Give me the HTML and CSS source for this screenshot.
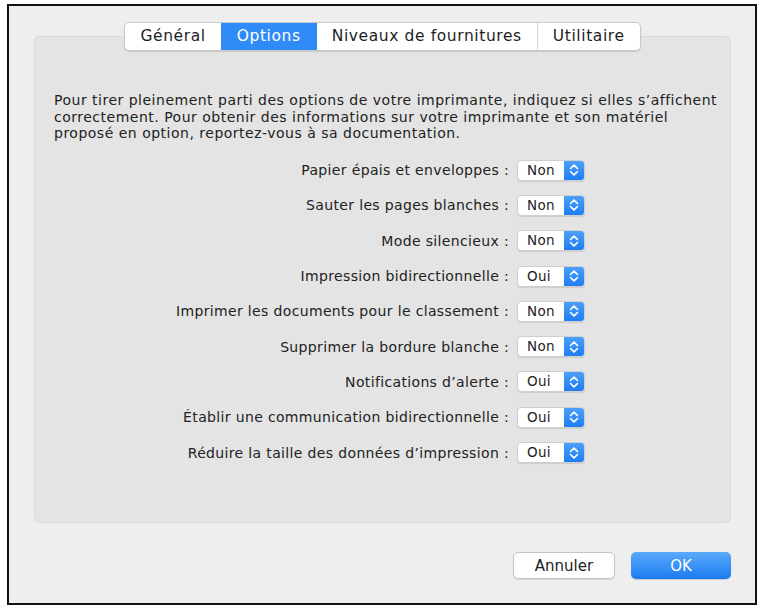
FILE: index.html
```html
<!DOCTYPE html>
<html lang="fr">
<head>
    <meta charset="UTF-8">
    <meta name="viewport" content="width=device-width, initial-scale=1.0">
    <title>Options de l'imprimante</title>
    <link rel="stylesheet" href="styles.css">
</head>
<body>

  <div class="window">

    <!-- Tab bar sits across the top edge of the panel -->
    <div class="tab-bar">
      <div class="tab">Général</div>
      <div class="tab tab-active">Options</div>
      <div class="tab">Niveaux de fournitures</div>
      <div class="tab">Utilitaire</div>
    </div>

    <div class="panel">
      <p class="intro">
        Pour tirer pleinement parti des options de votre imprimante, indiquez si elles s’affichent<br>
        correctement. Pour obtenir des informations sur votre imprimante et son matériel<br>
        proposé en option, reportez-vous à sa documentation.
      </p>

      <div class="options">
        <div class="option-row">
          <span class="option-label">Papier épais et enveloppes :</span>
          <div class="popup"><span class="popup-value">Non</span><span class="popup-arrows"><svg viewBox="0 0 20 20" width="20" height="20"><path d="M6.5 8.5 10 5.2l3.5 3.3M6.5 11.5 10 14.8l3.5-3.3" fill="none" stroke="#fff" stroke-width="1.6" stroke-linecap="round" stroke-linejoin="round"/></svg></span></div>
        </div>
        <div class="option-row">
          <span class="option-label">Sauter les pages blanches :</span>
          <div class="popup"><span class="popup-value">Non</span><span class="popup-arrows"><svg viewBox="0 0 20 20" width="20" height="20"><path d="M6.5 8.5 10 5.2l3.5 3.3M6.5 11.5 10 14.8l3.5-3.3" fill="none" stroke="#fff" stroke-width="1.6" stroke-linecap="round" stroke-linejoin="round"/></svg></span></div>
        </div>
        <div class="option-row">
          <span class="option-label">Mode silencieux :</span>
          <div class="popup"><span class="popup-value">Non</span><span class="popup-arrows"><svg viewBox="0 0 20 20" width="20" height="20"><path d="M6.5 8.5 10 5.2l3.5 3.3M6.5 11.5 10 14.8l3.5-3.3" fill="none" stroke="#fff" stroke-width="1.6" stroke-linecap="round" stroke-linejoin="round"/></svg></span></div>
        </div>
        <div class="option-row">
          <span class="option-label">Impression bidirectionnelle :</span>
          <div class="popup"><span class="popup-value">Oui</span><span class="popup-arrows"><svg viewBox="0 0 20 20" width="20" height="20"><path d="M6.5 8.5 10 5.2l3.5 3.3M6.5 11.5 10 14.8l3.5-3.3" fill="none" stroke="#fff" stroke-width="1.6" stroke-linecap="round" stroke-linejoin="round"/></svg></span></div>
        </div>
        <div class="option-row">
          <span class="option-label">Imprimer les documents pour le classement :</span>
          <div class="popup"><span class="popup-value">Non</span><span class="popup-arrows"><svg viewBox="0 0 20 20" width="20" height="20"><path d="M6.5 8.5 10 5.2l3.5 3.3M6.5 11.5 10 14.8l3.5-3.3" fill="none" stroke="#fff" stroke-width="1.6" stroke-linecap="round" stroke-linejoin="round"/></svg></span></div>
        </div>
        <div class="option-row">
          <span class="option-label">Supprimer la bordure blanche :</span>
          <div class="popup"><span class="popup-value">Non</span><span class="popup-arrows"><svg viewBox="0 0 20 20" width="20" height="20"><path d="M6.5 8.5 10 5.2l3.5 3.3M6.5 11.5 10 14.8l3.5-3.3" fill="none" stroke="#fff" stroke-width="1.6" stroke-linecap="round" stroke-linejoin="round"/></svg></span></div>
        </div>
        <div class="option-row">
          <span class="option-label">Notifications d’alerte :</span>
          <div class="popup"><span class="popup-value">Oui</span><span class="popup-arrows"><svg viewBox="0 0 20 20" width="20" height="20"><path d="M6.5 8.5 10 5.2l3.5 3.3M6.5 11.5 10 14.8l3.5-3.3" fill="none" stroke="#fff" stroke-width="1.6" stroke-linecap="round" stroke-linejoin="round"/></svg></span></div>
        </div>
        <div class="option-row">
          <span class="option-label">Établir une communication bidirectionnelle :</span>
          <div class="popup"><span class="popup-value">Oui</span><span class="popup-arrows"><svg viewBox="0 0 20 20" width="20" height="20"><path d="M6.5 8.5 10 5.2l3.5 3.3M6.5 11.5 10 14.8l3.5-3.3" fill="none" stroke="#fff" stroke-width="1.6" stroke-linecap="round" stroke-linejoin="round"/></svg></span></div>
        </div>
        <div class="option-row">
          <span class="option-label">Réduire la taille des données d’impression :</span>
          <div class="popup"><span class="popup-value">Oui</span><span class="popup-arrows"><svg viewBox="0 0 20 20" width="20" height="20"><path d="M6.5 8.5 10 5.2l3.5 3.3M6.5 11.5 10 14.8l3.5-3.3" fill="none" stroke="#fff" stroke-width="1.6" stroke-linecap="round" stroke-linejoin="round"/></svg></span></div>
        </div>
      </div>
    </div>

    <div class="button-row">
      <button class="btn btn-cancel">Annuler</button>
      <button class="btn btn-ok">OK</button>
    </div>

  </div>

</body>
</html>
```

FILE: styles.css
```css
body {
  margin: 0;
  background-color: #ffffff;
  font-family: "DejaVu Sans", "Noto Sans", sans-serif;
  color: #222;
}

.window {
  box-sizing: border-box;
  width: 750px;
  height: 601px;
  margin: 4px 0 0 7px;
  border: 2px solid #111;
  background-color: #eeeeee;
  padding: 16px 24px 0 25px;
  display: flex;
  flex-direction: column;
}

/* Tabs */
.tab-bar {
  align-self: center;
  display: flex;
  margin-bottom: -15px;
  position: relative;
  z-index: 2;
  background-color: #fff;
  border: 1px solid #c9c9c9;
  border-radius: 5px;
  box-shadow: 0 1px 1px rgba(0, 0, 0, 0.12);
  overflow: hidden;
}

.tab {
  height: 27px;
  line-height: 27px;
  padding: 0 15px;
  font-size: 15.5px;
  letter-spacing: 0.6px;
  color: #1e1e1e;
  border-left: 1px solid #d6d6d6;
}

.tab:first-child {
  border-left: none;
}

.tab-active {
  background-color: #2f8cf7;
  color: #fff;
  border-left-color: #2f8cf7;
}

.tab-active + .tab {
  border-left-color: #2f8cf7;
}

/* Group box */
.panel {
  box-sizing: border-box;
  height: 487px;
  background-color: #e4e4e4;
  border: 1px solid #dadada;
  border-radius: 5px;
  padding: 55px 2px 0 19px;
}

.intro {
  margin: 0;
  font-size: 14px;
  letter-spacing: 0.5px;
  line-height: 16.5px;
  white-space: nowrap;
}

.options {
  margin-top: 11px;
  padding-right: 143px;
}

.option-row {
  height: 35.3px;
  display: flex;
  align-items: center;
  justify-content: flex-end;
}

.option-label {
  font-size: 14px;
  letter-spacing: 0.35px;
  margin-right: 8px;
}

/* Pop-up button */
.popup {
  box-sizing: border-box;
  width: 68px;
  height: 21px;
  display: flex;
  background-color: #fff;
  border: 1px solid #cfcfcf;
  border-radius: 4px;
  box-shadow: 0 1px 1px rgba(0, 0, 0, 0.1);
  overflow: hidden;
}

.popup-value {
  flex: 1;
  font-size: 13.5px;
  letter-spacing: 0.3px;
  line-height: 19px;
  padding-left: 9px;
  color: #222;
}

.popup-arrows {
  width: 20px;
  height: 19px;
  display: flex;
  align-items: center;
  justify-content: center;
  background: linear-gradient(#4ba0f8, #1f7df4);
}

/* Buttons */
.button-row {
  display: flex;
  justify-content: flex-end;
  gap: 16px;
  margin-top: 29px;
}

.btn {
  box-sizing: border-box;
  width: 102px;
  height: 27px;
  border-radius: 5px;
  font-family: "DejaVu Sans", "Noto Sans", sans-serif;
  font-size: 15px;
  cursor: pointer;
}

.btn-cancel {
  background-color: #fff;
  color: #222;
  border: 1px solid #c4c4c4;
  box-shadow: 0 1px 1px rgba(0, 0, 0, 0.1);
}

.btn-ok {
  width: 100px;
  background: linear-gradient(#5aaaf9, #1c7bf2);
  color: #fff;
  border: none;
  box-shadow: 0 1px 1px rgba(0, 0, 0, 0.15);
}
```
